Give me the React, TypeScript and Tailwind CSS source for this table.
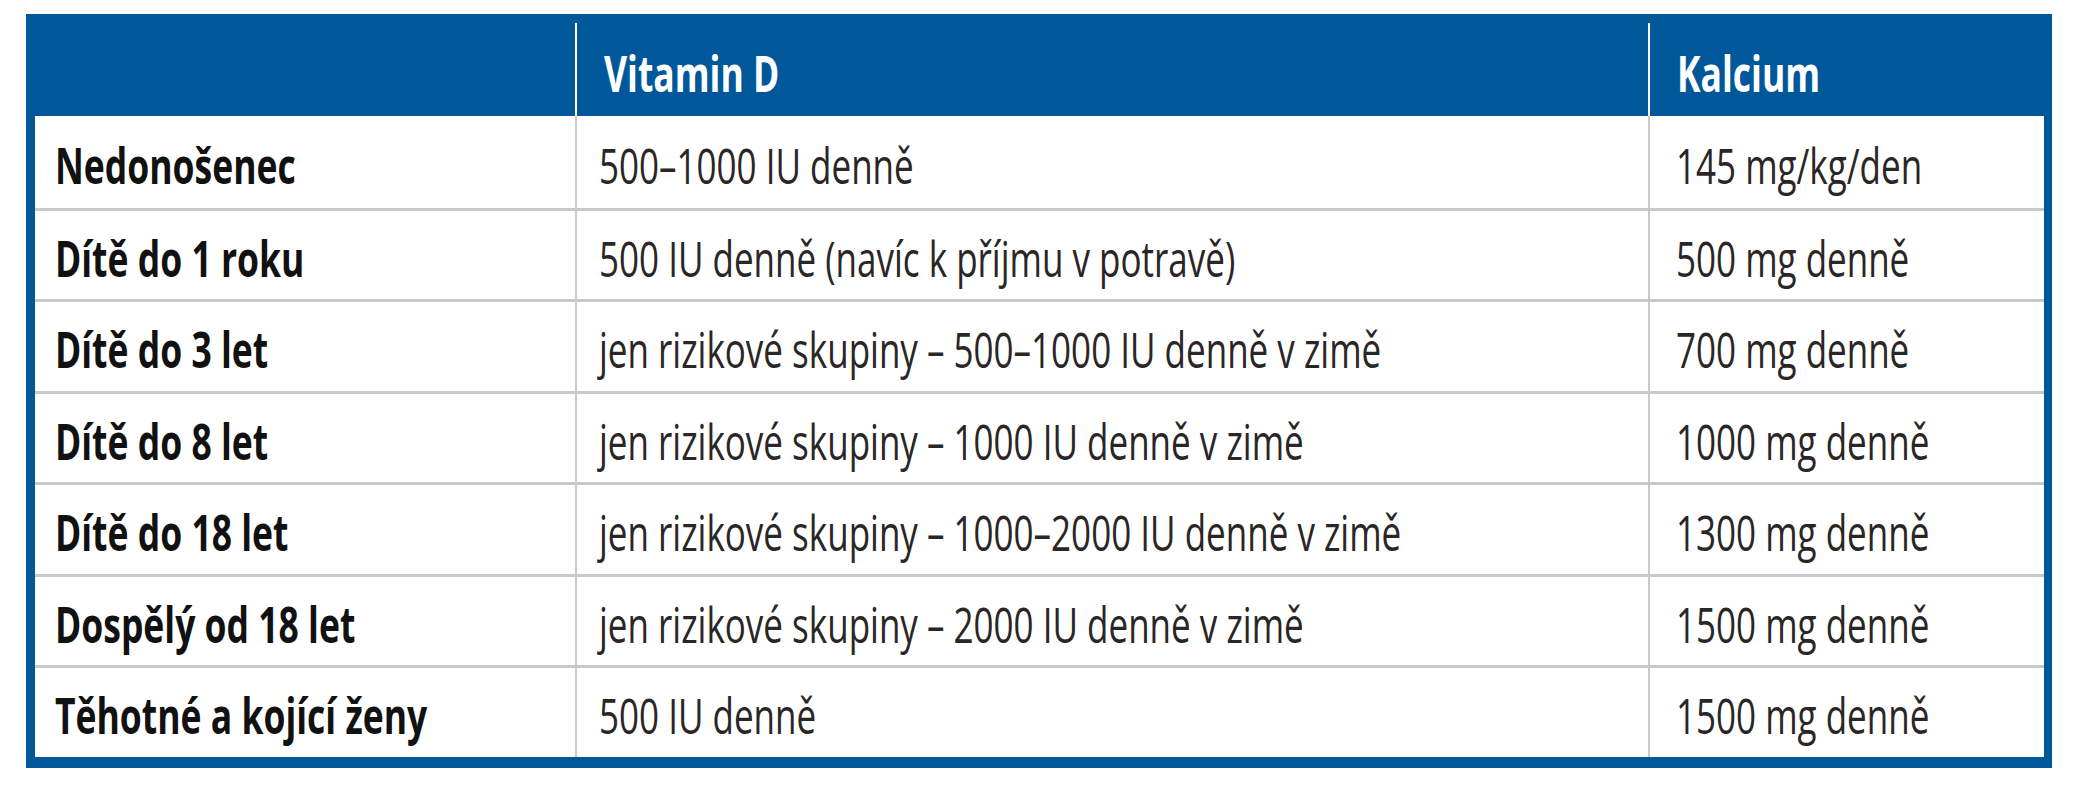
import React from "react";

const ROWS: [string, string, string][] = [
  ["Nedonošenec", "500–1000 IU denně", "145 mg/kg/den"],
  ["Dítě do 1 roku", "500 IU denně (navíc k příjmu v potravě)", "500 mg denně"],
  ["Dítě do 3 let", "jen rizikové skupiny – 500–1000 IU denně v zimě", "700 mg denně"],
  ["Dítě do 8 let", "jen rizikové skupiny – 1000 IU denně v zimě", "1000 mg denně"],
  ["Dítě do 18 let", "jen rizikové skupiny – 1000–2000 IU denně v zimě", "1300 mg denně"],
  ["Dospělý od 18 let", "jen rizikové skupiny – 2000 IU denně v zimě", "1500 mg denně"],
  ["Těhotné a kojící ženy", "500 IU denně", "1500 mg denně"],
];

// condensed look: the source font is a narrow humanist sans
function Bold({ children }: { children: React.ReactNode }) {
  return (
    <span className="inline-block origin-left scale-x-[0.71] whitespace-nowrap font-bold">
      {children}
    </span>
  );
}

function Plain({ children }: { children: React.ReactNode }) {
  return (
    <span className="inline-block origin-left scale-x-[0.7] whitespace-nowrap">
      {children}
    </span>
  );
}

export default function App() {
  return (
    <div className="min-h-[800px] bg-white pl-[26px] pt-[14px] font-['Open_Sans','Noto_Sans',sans-serif] text-[50px] leading-none">
      <div className="w-[2026px] border-b-[11px] border-l-[9px] border-r-[8px] border-t-[9px] border-[#00589b] bg-white">
        {/* header */}
        <div className="flex h-[93px] bg-[#00589b] text-white">
          <div className="w-[540px]" />
          <div className="flex w-[1073px] items-center border-l-2 border-white pl-[27px] pt-[6px]">
            <Bold>Vitamin D</Bold>
          </div>
          <div className="flex flex-1 items-center border-l-2 border-white pl-[27px] pt-[6px]">
            <Bold>Kalcium</Bold>
          </div>
        </div>

        {/* body */}
        {ROWS.map(([who, vitD, ca], i) => (
          <div
            key={who}
            className={`flex h-[91.5px] ${i > 0 ? "border-t-[3px] border-[#c9c9c9]" : ""}`}
          >
            <div className="flex w-[540px] items-center pl-[20px] pt-[6px] text-[#111]">
              <Bold>{who}</Bold>
            </div>
            <div className="flex w-[1073px] items-center border-l-2 border-[#c9c9c9] pl-[22px] pt-[6px] text-[#2a2626]">
              <Plain>{vitD}</Plain>
            </div>
            <div className="flex flex-1 items-center border-l-2 border-[#c9c9c9] pl-[26px] pt-[6px] text-[#2a2626]">
              <Plain>{ca}</Plain>
            </div>
          </div>
        ))}
      </div>
    </div>
  );
}
